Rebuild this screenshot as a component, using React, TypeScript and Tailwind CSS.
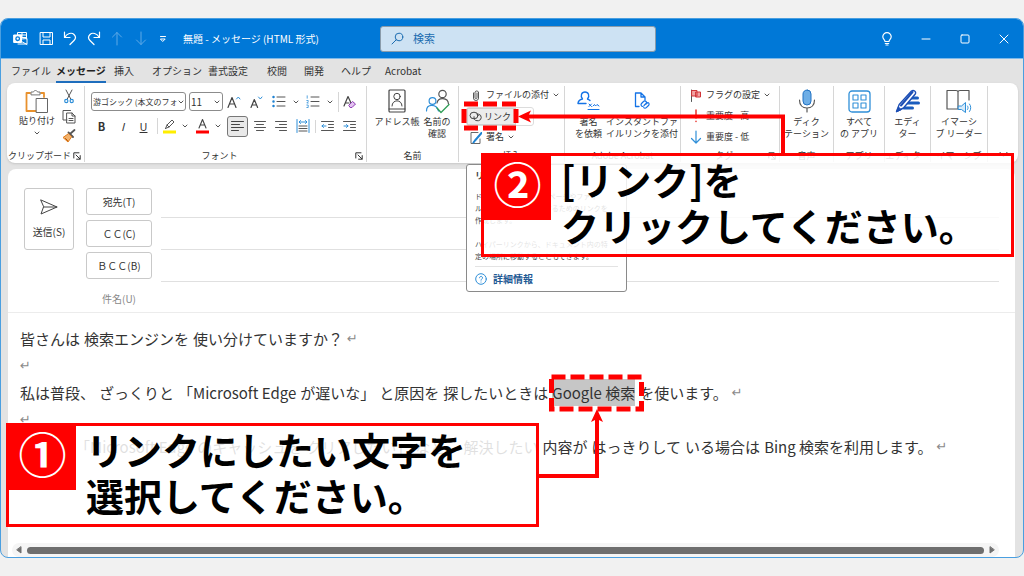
import React from "react";

const tabs = [
    { label: "ファイル", width: "w-[45px]" },
    { label: "メッセージ", width: "w-[58px]", active: true },
    { label: "挿入", width: "w-[38px]" },
    { label: "オプション", width: "w-[56px]" },
    { label: "書式設定", width: "w-[59px]" },
    { label: "校閲", width: "w-[37px]" },
    { label: "開発", width: "w-[37px]" },
    { label: "ヘルプ", width: "w-[44px]" },
    { label: "Acrobat", width: "w-[60px]" },
];

type IconProps = {
    w?: number;
    h?: number;
    className?: string;
    children: React.ReactNode;
};

const Icon = ({ w = 16, h = 16, className = "", children }: IconProps) => (
    <svg
        width={w}
        height={h}
        viewBox={`0 0 ${w} ${h}`}
        fill="none"
        stroke="currentColor"
        strokeLinecap="round"
        strokeLinejoin="round"
        className={`shrink-0 ${className}`}
        aria-hidden="true"
    >
        {children}
    </svg>
);

const Chevron = ({ className = "" }: { className?: string }) => (
    <Icon w={6} h={4} className={className}>
        <path d="M1 1l2 2 2-2" stroke="#555" />
    </Icon>
);

const Launcher = () => (
    <button aria-label="詳細" className="absolute right-[3px] bottom-[2px]">
        <Icon w={8} h={8}>
            <path d="M0.8 6V0.8H6M3 3l4 4M7.2 3.6v3.6H3.6" />
        </Icon>
    </button>
);

const Group = ({
    label,
    width,
    launcher,
    children,
}: {
    label: string;
    width: string;
    launcher?: boolean;
    children: React.ReactNode;
}) => (
    <section className={`relative mt-[3px] mb-px flex shrink-0 flex-col justify-between border-r border-[#d6d6d6] pt-[3px] ${width}`}>
        {children}
        <div className={`text-center leading-3 whitespace-nowrap ${launcher ? "pr-3" : ""}`}>{label}</div>
        {launcher && <Launcher />}
    </section>
);

const BigButton = ({ lines, children }: { lines: string[]; children: React.ReactNode }) => (
    <button className="flex flex-col items-center text-center leading-3 whitespace-nowrap">
        <span className="mb-[3px] flex h-6 items-center">{children}</span>
        {lines.map((line) => (
            <span key={line}>{line}</span>
        ))}
    </button>
);

/* ---------- title bar ---------- */

const TitleBar = () => (
    <header className="flex h-10 items-center border-b border-[#7db9ea] bg-[#0078d7] pl-3 text-[10px] text-white">
        <div className="flex w-[170px] items-center">
            <span className="w-[26px]">
                <Icon w={15} h={15}>
                    <path d="M4.5 4V1.5h9V8M9 1.5v5M4.5 4h9M9 6.5h4.5M8.5 8l5.5-.5v5.5H5" />
                    <path d="M8.5 10.5 14 13.5" />
                    <rect x="1" y="4" width="7.5" height="7.5" fill="#fff" />
                    <circle cx="4.7" cy="7.7" r="1.8" stroke="#0078d7" strokeWidth="1.3" />
                </Icon>
            </span>
            <button aria-label="保存" className="w-6">
                <Icon w={15} h={15}>
                    <path d="M1.5 1.5h12v12h-12zM4 1.5v4.5h7V1.5M4 13.5V9h7v4.5" />
                </Icon>
            </button>
            <button aria-label="元に戻す" className="w-6">
                <Icon w={14} h={15}>
                    <path d="M1.5 1v5.5H7M1.8 6.200C4 2.5 8.5 1 11 3.5s1.500 4.500 0 6L7 13.5" strokeWidth="1.2" />
                </Icon>
            </button>
            <button aria-label="やり直し" className="w-6">
                <Icon w={14} h={15}>
                    <path d="M12.5 1v5.5H7M12.2 6.200C10 2.5 5.5 1 3 3.5s-1.500 4.500 0 6L7 13.5" strokeWidth="1.2" />
                </Icon>
            </button>
            <button aria-label="前へ" className="w-6 text-[#5fa9e6]">
                <Icon w={12} h={15}>
                    <path d="M6 14V1.5M1.5 6 6 1.5 10.5 6" />
                </Icon>
            </button>
            <button aria-label="次へ" className="w-6 text-[#5fa9e6]">
                <Icon w={12} h={15}>
                    <path d="M6 1v12.5M1.5 9 6 13.5 10.5 9" />
                </Icon>
            </button>
            <button aria-label="カスタマイズ">
                <Icon w={8} h={8}>
                    <path d="M1.5 1.5h5M1.8 4h4.400L4 6.200z" />
                </Icon>
            </button>
        </div>
        <h1 className="w-[197px] whitespace-pre">無題 - メッセージ (HTML 形式)</h1>
        <label className="flex h-[26px] w-[276px] items-center gap-[9px] rounded-[3px] border border-[#8a9cab] bg-[#cde2f3] pl-2.5 text-[#1b6cb0]">
            <Icon w={13} h={13}>
                <circle cx="8" cy="5" r="3.8" />
                <path d="M5.2 7.8 1 12" />
            </Icon>
            <input
                aria-label="検索"
                placeholder="検索"
                className="w-full bg-transparent text-[11px] outline-none placeholder:text-[#1b6cb0]"
            />
        </label>
        <div className="ml-auto flex items-center pr-[14px]">
            <button aria-label="ヒント" className="w-10">
                <Icon w={12} h={14}>
                    <path d="M4 9.5C4 8 1.8 7.2 1.8 4.8a4.2 4.2 0 0 1 8.4 0C10.2 7.2 8 8 8 9.5zM4.3 11.5h3.4M5 13h2" strokeWidth="1.2" />
                </Icon>
            </button>
            <button aria-label="最小化" className="w-[39px]">
                <Icon w={10} h={10}>
                    <path d="M1 5h8" />
                </Icon>
            </button>
            <button aria-label="最大化" className="w-[39px]">
                <Icon w={10} h={10}>
                    <rect x="1" y="1" width="8" height="8" rx="1" />
                </Icon>
            </button>
            <button aria-label="閉じる">
                <Icon w={10} h={10}>
                    <path d="m1 1 8 8M9 1 1 9" />
                </Icon>
            </button>
        </div>
    </header>
);

/* ---------- ribbon ---------- */

const ClipboardGroup = () => (
    <Group label="クリップボード" width="w-[78px]" launcher>
        <div className="flex pl-3">
            <button className="flex w-9 flex-col items-center leading-3 whitespace-nowrap">
                <Icon w={24} h={26}>
                    <path d="M5 4H1.5v18H11M16 4h3v4" stroke="#e8912d" strokeWidth="1.8" />
                    <path d="M6 5.5V3h2.500C9 1 12 1 12.500 3H15v2.500z" stroke="#777" fill="#fff" />
                    <rect x="11.5" y="9.5" width="11" height="14" stroke="#666" fill="#fff" />
                </Icon>
                <span className="mb-1">貼り付け</span>
                <Chevron />
            </button>
            <div className="flex w-6 flex-col items-center gap-[5px] pl-1">
                <button aria-label="切り取り">
                    <Icon w={10} h={15}>
                        <path d="M2 1l5 9.500M8 1 3 10.500" stroke="#555" />
                        <circle cx="2.3" cy="12" r="1.6" stroke="#2f8fd8" strokeWidth="1.2" />
                        <circle cx="7.7" cy="12" r="1.6" stroke="#2f8fd8" strokeWidth="1.2" />
                    </Icon>
                </button>
                <button aria-label="コピー">
                    <Icon w={14} h={15}>
                        <path d="M5 11H1V1.5h7.5M5 4h5l3 3v7H5zM10 4v3h3M7 9.5h4M7 11.5h4" stroke="#555" />
                    </Icon>
                </button>
                <button aria-label="書式のコピー">
                    <Icon w={14} h={14}>
                        <path d="M12.5 1 8.5 4.5M6.5 3.5l4.500 4.500" stroke="#555" strokeWidth="1.8" />
                        <path d="M6 5 1 8.500l5 4.500 3.500-5z" stroke="#e07b1a" fill="#f3b26b" />
                        <path d="m3.5 9.5 2 2" stroke="#b55400" />
                    </Icon>
                </button>
            </div>
        </div>
    </Group>
);

const ListIcon = ({ numbered }: { numbered?: boolean }) => (
    <Icon w={14} h={13}>
        <path d="M5 2h8M5 6.5h8M5 11h8" stroke="#555" />
        {numbered ? (
            <path d="M1.2.8v2.400M.8 5.500h1.400v1L.8 8h1.400M.8 10h1.400v2.500H.8" stroke="#2f8fd8" strokeWidth=".8" />
        ) : (
            <path d="M1.5 2h.01M1.5 6.5h.01M1.5 11h.01" stroke="#1f83d3" strokeWidth="2.5" />
        )}
    </Icon>
);

const FontGroup = () => (
    <Group label="フォント" width="w-[282px]" launcher>
        <div className="pl-[6px]">
            <div className="mt-[3px] flex h-[19px] items-center">
                <div className="relative mr-[3px]">
                    <select
                        aria-label="フォント"
                        className="h-[19px] w-[95px] appearance-none overflow-hidden rounded-[3px] border border-[#8c8c8c] bg-white pl-px text-[8px] whitespace-nowrap"
                    >
                        <option>游ゴシック (本文のフォ</option>
                    </select>
                    <Chevron className="absolute top-2 right-[2px]" />
                </div>
                <div className="relative w-[38px]">
                    <select
                        aria-label="フォント サイズ"
                        className="h-[19px] w-[34px] appearance-none rounded-[3px] border border-[#8c8c8c] bg-white pl-px text-[10px]"
                    >
                        <option>11</option>
                    </select>
                    <Chevron className="absolute top-2 right-[7px]" />
                </div>
                <button aria-label="フォント サイズの拡大" className="w-[23px]">
                    <Icon w={14} h={14}>
                        <path d="M1 12.5 5 2.5l4 10M2.5 9h5" stroke="#444" strokeWidth="1.2" />
                        <path d="m9.5 4 1.8-2L13 4" stroke="#2f8fd8" />
                    </Icon>
                </button>
                <button aria-label="フォント サイズの縮小" className="w-[22px]">
                    <Icon w={13} h={14}>
                        <path d="m1 12.5 3.300-8 3.300 8M2.200 10h4.200" stroke="#444" strokeWidth="1.2" />
                        <path d="m8.5 2 1.8 2L12 2" stroke="#2f8fd8" />
                    </Icon>
                </button>
                <button aria-label="箇条書き" className="flex w-[34px] items-center gap-[7px]">
                    <ListIcon />
                    <Chevron />
                </button>
                <button aria-label="段落番号" className="flex w-8 items-center gap-[7px]">
                    <ListIcon numbered />
                    <Chevron />
                </button>
                <button aria-label="書式のクリア" className="border-l border-[#d6d6d6] py-[3px] pl-1">
                    <Icon w={14} h={14}>
                        <path d="m1 11 4-9.500L8 8M2.500 8H6" stroke="#444" strokeWidth="1.2" />
                        <path d="m6 10 3.500-3.500 3 2.500L9 12.500H7.500z" stroke="#8e3bb5" fill="#e3c3f0" />
                    </Icon>
                </button>
            </div>
            <div className="mt-[5px] flex h-5 items-center text-[11px]">
                <button className="w-[21px] text-center font-bold">B</button>
                <button className="w-[21px] text-center italic">I</button>
                <button className="w-[21px] text-center underline">U</button>
                <button aria-label="蛍光ペンの色" className="ml-[3px] flex items-center gap-[6px] border-l border-[#d6d6d6] pl-[5px]">
                    <Icon w={13} h={16}>
                        <path d="M0 14h13" stroke="#ffee00" strokeWidth="3" strokeLinecap="butt" />
                        <path d="M2.5 10.5 4 7l5-5 2 2-5 5-3.500 1.500M4 7l2 2" stroke="#555" />
                    </Icon>
                    <Chevron />
                </button>
                <button aria-label="フォントの色" className="ml-2 flex items-center gap-[6px]">
                    <Icon w={13} h={16}>
                        <path d="M0 14h13" stroke="#ff0000" strokeWidth="3" strokeLinecap="butt" />
                        <path d="m3 10 3.500-8.500L10 10M4.300 7h4.400" stroke="#444" strokeWidth="1.1" />
                    </Icon>
                    <Chevron />
                </button>
                <button aria-label="左揃え" className="mx-[6px] rounded-[3px] border border-[#777] bg-[#e9e9e9] p-[3px]">
                    <Icon w={13} h={13}>
                        <path d="M.5 1.5h12M.5 4.5h8M.5 7.5h12M.5 10.5h7" stroke="#444" />
                    </Icon>
                </button>
                <div className="flex items-center gap-[9px]">
                    <button aria-label="中央揃え">
                        <Icon w={12} h={13}>
                            <path d="M.5 1.5h11M2.5 4.5h7M.5 7.5h11M2.5 10.5h7" stroke="#555" />
                        </Icon>
                    </button>
                    <button aria-label="右揃え">
                        <Icon w={12} h={13}>
                            <path d="M.5 1.5h11M4.5 4.5h7M.5 7.5h11M4.5 10.5h7" stroke="#555" />
                        </Icon>
                    </button>
                    <button aria-label="均等割り付け">
                        <Icon w={14} h={14}>
                            <path d="M1 .5v13M13 .5v13M3.500 3h7M4.500 1.500 3 3l1.500 1.500M9.500 1.500 11 3 9.500 4.500" stroke="#2f8fd8" />
                            <path d="M3 7h8M3 9.5h8M3 12h8" stroke="#555" />
                        </Icon>
                    </button>
                </div>
                <div className="ml-[5px] flex items-center gap-[9px] border-l border-[#d6d6d6] pl-[5px]">
                    <button aria-label="インデントを減らす">
                        <Icon w={13} h={13}>
                            <path d="M.5 1.5h12M7.5 4.5h5M7.5 7.5h5M.5 10.5h12" stroke="#555" />
                            <path d="M5 6H1M2.5 4.5 1 6l1.500 1.500" stroke="#2f8fd8" />
                        </Icon>
                    </button>
                    <button aria-label="インデントを増やす">
                        <Icon w={13} h={13}>
                            <path d="M.5 1.5h12M7.5 4.5h5M7.5 7.5h5M.5 10.5h12" stroke="#555" />
                            <path d="M1 6h4M3.5 4.5 5 6 3.5 7.5" stroke="#2f8fd8" />
                        </Icon>
                    </button>
                </div>
            </div>
        </div>
    </Group>
);

const NameGroup = () => (
    <Group label="名前" width="w-[92px]">
        <div className="flex justify-center gap-1">
            <BigButton lines={["アドレス帳"]}>
                <Icon w={18} h={24}>
                    <rect x="1" y="1" width="16" height="22" rx="1" stroke="#444" strokeWidth="1.2" />
                    <path d="M1 20h16" stroke="#444" />
                    <circle cx="9" cy="7.5" r="3.2" stroke="#444" />
                    <path d="M4 17c0-7 10-7 10 0" stroke="#444" />
                </Icon>
            </BigButton>
            <BigButton lines={["名前の", "確認"]}>
                <Icon w={25} h={25}>
                    <circle cx="17.5" cy="5" r="3.7" stroke="#555" strokeWidth="1.2" />
                    <path d="M12 14c1-6 11-6 11.500 1" stroke="#555" strokeWidth="1.2" />
                    <circle cx="7.5" cy="12" r="3.4" stroke="#2f8fd8" strokeWidth="1.2" />
                    <path d="M1.5 22c0-7.500 10-7.500 12 0" stroke="#2f8fd8" strokeWidth="1.2" />
                    <path d="m12 19 4 4.500 8-8" stroke="#2f9e57" strokeWidth="1.3" />
                </Icon>
            </BigButton>
        </div>
    </Group>
);

const InsertGroup = () => (
    <Group label="挿入" width="w-[106px]">
        <div className="flex flex-col items-start pl-[11px] whitespace-nowrap">
            <button className="flex h-3 items-center gap-1">
                <Icon w={12} h={13}>
                    <path d="M3.5 4v5a2.5 2.5 0 0 0 5 0V3a2 2 0 0 0-3.500 0v5.500a1 1 0 0 0 2 0V4" stroke="#555" />
                </Icon>
                ファイルの添付
                <Chevron />
            </button>
            <div className="mt-[6px] -ml-[4px] flex h-[19px] w-[68px] rounded-[3px] border border-[#dcdcdc]">
                <button className="flex w-[49px] items-center gap-px border border-[#cfcfcf] bg-[#ececec] pl-px">
                    <Icon w={14} h={11}>
                        <ellipse cx="5" cy="4.5" rx="4" ry="3.3" stroke="#444" />
                        <path d="M8 3.2h1.500a3.300 3.300 0 0 1 0 6.500H8c-2 0-3.500-1.500-3-4" stroke="#444" />
                    </Icon>
                    リンク
                </button>
            </div>
            <button className="mt-[5px] flex h-3 items-center gap-1">
                <Icon w={12} h={13}>
                    <path d="M8 1.5H1v11h9V8" stroke="#666" />
                    <path d="M11.5 2 5 9.500l-1.500 2" stroke="#1f83d3" strokeWidth="2" />
                </Icon>
                署名
                <Chevron />
            </button>
        </div>
    </Group>
);

const AcrobatGroup = () => (
    <Group label="Adobe Acrobat" width="w-[116px]">
        <div className="flex justify-end gap-1 pr-[2px]">
            <BigButton lines={["署名", "を依頼"]}>
                <Icon w={23} h={20}>
                    <path
                        d="M9 12.5H1c0-3 2.500-4 4.500-4.500C3 5 4.500 1 8 1s5 4 2.500 7c1 .5 2 .8 2.500 1.500"
                        stroke="#1473e6"
                        strokeWidth="1.4"
                    />
                    <path d="M11 18.5h11M12 13l2.500 2.500M14.500 13 12 15.500M16 15l1.500-1.500L18.500 15l1.500-1.500 2 1.500" stroke="#1473e6" />
                </Icon>
            </BigButton>
            <BigButton lines={["インスタントファ", "イルリンクを添付"]}>
                <Icon w={16} h={20}>
                    <path d="M5 15.5H1.5V2H7l4 4v3M7 2v4h4" stroke="#1473e6" strokeWidth="1.3" />
                    <path
                        d="m7.5 12.5 2-2a1.8 1.8 0 0 1 2.600 2.600M13.500 12l.5-.5a1.800 1.800 0 0 1 .5 3L12.300 16.700a1.800 1.800 0 0 1-2.600 0M7.500 12.500a1.800 1.800 0 0 0 1.500 3M10 14.500l2.500-2.500"
                        stroke="#1473e6"
                        strokeWidth="1.2"
                    />
                </Icon>
            </BigButton>
        </div>
    </Group>
);

const TagGroup = () => (
    <Group label="タグ" width="w-[99px]" launcher>
        <div className="flex flex-col items-start gap-[9px] pl-[9px] whitespace-nowrap">
            <button className="flex h-3 items-center gap-1">
                <Icon w={12} h={13}>
                    <path d="M1.5 1v11.500" stroke="#555" />
                    <path d="M2 1.5h5V7H2zM6 3h4.500v5H6z" stroke="#d13438" fill="#f2a3a3" />
                </Icon>
                フラグの設定
                <Chevron />
            </button>
            <button className="flex h-3 items-center gap-1">
                <Icon w={12} h={14}>
                    <path d="M6 1v8M6 12.3v.2" stroke="#e8322b" strokeWidth="1.5" />
                </Icon>
                重要度 - 高
            </button>
            <button className="flex h-3 items-center gap-1">
                <Icon w={12} h={14}>
                    <path d="M6 1v12M1.5 8.5 6 13l4.500-4.500" stroke="#2f8fd8" strokeWidth="1.2" />
                </Icon>
                重要度 - 低
            </button>
        </div>
    </Group>
);

const Ribbon = () => (
    <div className="mr-[5px] ml-[6px] flex h-20 overflow-hidden rounded-lg bg-white text-[9px] text-[#333] shadow-sm">
        <ClipboardGroup />
        <FontGroup />
        <NameGroup />
        <InsertGroup />
        <AcrobatGroup />
        <TagGroup />
        <Group label="音声" width="w-[54px]">
            <BigButton lines={["ディク", "テーション"]}>
                <Icon w={18} h={24}>
                    <rect x="5" y="1" width="8" height="15" rx="4" stroke="#2272c3" fill="#6eaee6" />
                    <path d="M1.5 11c0 5 3 8 7.500 8s7.500-3 7.500-8M9 19v4" stroke="#555" strokeWidth="1.2" />
                </Icon>
            </BigButton>
        </Group>
        <Group label="アプリ" width="w-[51px]">
            <BigButton lines={["すべて", "の アプリ"]}>
                <Icon w={23} h={23}>
                    <rect x="1" y="1" width="21" height="21" rx="3" stroke="#2f8fd8" strokeWidth="1.3" />
                    <path d="M5 5h5v5H5zM13 5h5v5h-5zM5 13h5v5H5zM13 13h5v5h-5z" stroke="#2f8fd8" strokeWidth="1.1" />
                </Icon>
            </BigButton>
        </Group>
        <Group label="エディター" width="w-[46px]">
            <BigButton lines={["エディ", "ター"]}>
                <Icon w={25} h={24}>
                    <path d="M16 9h6.500M12 14h11.500M9 19h8.500" stroke="#1a5dbe" strokeWidth="3" />
                    <path d="M16.500 2c2-1.500 5 .5 3.800 3L8.500 19 1.500 22.500 4.200 15.500z" stroke="#1d4fb5" fill="#fff" strokeWidth="1.4" />
                    <path d="M17.500 3 6 16.500" stroke="#1d4fb5" strokeWidth="2" />
                    <path d="m1.500 22.500 2-4.500 2.500 2.500z" fill="#1d4fb5" stroke="#1d4fb5" />
                </Icon>
            </BigButton>
        </Group>
        <Group label="イマーシブ" width="w-[57px]">
            <BigButton lines={["イマーシ", "ブ リーダー"]}>
                <Icon w={26} h={24}>
                    <path d="M12 20H1V1.5h9c1 0 2 .5 2 1.500 0-1 1-1.500 2-1.500h9V11M12 3v17" stroke="#555" strokeWidth="1.2" />
                    <path d="M12.500 17h3l4-3.500v10l-4-3h-3z" stroke="#2f8fd8" fill="#d5eafa" />
                    <path d="M21.500 17c.8 1 .8 2.500 0 3.500M23.500 15c1.700 2.200 1.700 5.200 0 7.500" stroke="#2f8fd8" />
                </Icon>
            </BigButton>
        </Group>
        <button aria-label="リボンを折りたたむ" className="flex flex-1 items-end justify-center pb-[6px]">
            <Icon w={9} h={5}>
                <path d="M1 .8 4.5 4 8 .8" strokeWidth="1.2" />
            </Icon>
        </button>
    </div>
);

/* ---------- message ---------- */

const Return = () => <span className="font-['DejaVu_Sans'] text-[13px] leading-none text-[#8a8a8a]">↵</span>;

const Phrases = ({ items }: { items: string[] }) => (
    <>
        {items.map((item) => (
            <span key={item}>{item}</span>
        ))}
    </>
);

const recipients = ["宛先(T)", "ＣＣ(C)", "ＢＣＣ(B)"];

const Compose = () => (
    <main className="mt-[6px] mr-2 ml-[7px] flex flex-1 flex-col rounded-t-lg bg-white text-[#333]">
        <div className="flex items-start gap-3 border-b border-[#ececec] pt-[19px] pr-4 pl-4 text-[10px]">
            <button className="flex h-[62px] w-[50px] flex-col items-center justify-center gap-[9px] rounded-[3px] border border-[#c9c9c9]">
                <Icon w={18} h={16}>
                    <path d="m1 1 16 7L1 15l2.500-7zM3.500 8H17" stroke="#444" />
                </Icon>
                送信(S)
            </button>
            <div className="flex flex-1 flex-col gap-[2px]">
                {recipients.map((name) => (
                    <div key={name} className="flex h-[30px] items-start gap-[9px]">
                        <button className="h-[27px] w-[66px] rounded-[3px] border border-[#c9c9c9] whitespace-pre">{name}</button>
                        <input aria-label={name} className="h-[30px] flex-1 border-b border-[#e0e0e0] outline-none" />
                    </div>
                ))}
                <div className="flex h-7 items-center gap-[9px]">
                    <label htmlFor="subject" className="w-[66px] text-center text-[#888]">
                        件名(U)
                    </label>
                    <input id="subject" className="flex-1 outline-none" />
                </div>
            </div>
        </div>
        <article className="flex-1 pt-[12px] pl-3 text-[15px] leading-[27px] whitespace-nowrap [&>p]:flex [&>p]:h-[27px] [&>p]:items-center [&>p]:gap-1">
            <p>
                <Phrases items={["皆さんは", "検索エンジンを", "使い分けていますか？"]} />
                <Return />
            </p>
            <p>
                <Return />
            </p>
            <p>
                <Phrases items={["私は普段、", "ざっくりと", "「Microsoft Edge", "が遅いな」", "と原因を", "探したいときは"]} />
                <mark className="bg-[#c6c6c6] text-inherit">Google 検索</mark>
                <span>を使います。</span>
                <Return />
            </p>
            <p>
                <Return />
            </p>
            <p className="pl-[55px]">
                <Phrases items={["「Microsoft Edge", "のキャッシュを", "クリアしたい」", "など、", "解決したい", "内容が", "はっきりして", "いる場合は"]} />
                <span>Bing 検索を利用します。</span>
                <Return />
            </p>
        </article>
        <div className="mr-4 ml-1 flex h-[14px] items-center gap-[5px] rounded-full bg-[#f5f5f5] px-1 text-[#6e6e6e]">
            <Icon w={6} h={8}>
                <path d="M5 1v6L1 4z" fill="currentColor" />
            </Icon>
            <div className="h-[7px] flex-1 rounded-full bg-[#6e6e6e]" />
            <Icon w={6} h={8}>
                <path d="M1 1v6l4-3z" fill="currentColor" />
            </Icon>
        </div>
    </main>
);

/* ---------- floating layers ---------- */

const LinkTooltip = () => (
    <aside
        role="tooltip"
        className="absolute top-[164px] left-[466px] flex h-[128px] w-[161px] flex-col rounded-[3px] border border-[#8a8a8a] bg-white px-2 pt-[5px] text-[7px] leading-3 text-[#444]"
    >
        <strong className="mb-2 text-[9px]">リンク</strong>
        <p className="mb-3 whitespace-nowrap">
            ドキュメントから Web ページやファイ
            <br />
            ルにすばやくアクセスするためのリンクを
            <br />
            作成します。
        </p>
        <p className="whitespace-nowrap">
            ハイパーリンクから、ドキュメント内の特
            <br />
            定の場所に移動することもできます。
        </p>
        <a href="#help" className="mt-1 flex flex-1 items-center gap-[6px] border-t border-[#e3e3e3] text-[10px] font-bold text-[#1f5a94]">
            <Icon w={12} h={12} className="text-[#2f8fd8]">
                <circle cx="6" cy="6" r="5.3" />
                <path d="M4.5 4.8c0-2 3-2 3 0 0 1.200-1.500 1.200-1.500 2.400M6 9v.1" />
            </Icon>
            詳細情報
        </a>
    </aside>
);

const Callout = ({ mark, className, children }: { mark: string; className: string; children: React.ReactNode }) => (
    <div className={`absolute flex h-[104px] items-start border-[3px] border-[#ff0000] bg-white/85 ${className}`}>
        <div className="flex h-16 w-[67px] items-center justify-center bg-[#ff0000] pb-3 text-[48px] leading-none font-bold text-white">
            {mark}
        </div>
        <p className="pl-[10px] text-[38px] leading-[46px] font-bold whitespace-nowrap text-black">{children}</p>
    </div>
);

const Pointers = () => (
    <svg width="1024" height="576" viewBox="0 0 1024 576" fill="none" stroke="#ff0000" className="pointer-events-none absolute top-0 left-0">
        <rect x="464" y="104" width="52" height="24" strokeWidth="5" strokeDasharray="14 5" />
        <path d="M783 154V116.500H526" strokeWidth="4" />
        <path d="m518 116.500 13-6-3 6 3 6z" fill="#ff0000" stroke="none" />
        <rect x="551.5" y="377" width="90" height="32" strokeWidth="5" strokeDasharray="14 5" />
        <path d="M539 476h58v-58" strokeWidth="4" />
        <path d="m597 409-6 13 6-3 6 3z" fill="#ff0000" stroke="none" />
    </svg>
);

export default function App() {
    return (
        <div className="relative flex min-h-screen flex-col overflow-hidden bg-[#f1f1f1] pt-[18px] pb-[18px] font-['Noto_Sans_CJK_JP',sans-serif]">
            <div className="flex flex-1 flex-col overflow-hidden rounded-lg border border-[#4a9fe0] bg-[#e3e3e3]">
                <TitleBar />
                <nav className="flex h-6 items-center pl-[10px] text-[10px] text-[#333]">
                    {tabs.map((tab) => (
                        <button key={tab.label} className={`flex h-full whitespace-nowrap ${tab.width}`}>
                            <span
                                className={
                                    tab.active
                                        ? "border-b-2 border-[#1f6fbf] pt-1 leading-4 font-bold text-[#222]"
                                        : "border-b-2 border-transparent pt-1 leading-4"
                                }
                            >
                                {tab.label}
                            </span>
                        </button>
                    ))}
                </nav>
                <Ribbon />
                <Compose />
            </div>
            <LinkTooltip />
            <Pointers />
            <Callout mark="②" className="top-[153px] left-[481px] w-[533px]">
                [リンク]を
                <br />
                クリックしてください。
            </Callout>
            <Callout mark="①" className="top-[423px] left-[6px] w-[533px]">
                リンクにしたい文字を
                <br />
                選択してください。
            </Callout>
        </div>
    );
}
